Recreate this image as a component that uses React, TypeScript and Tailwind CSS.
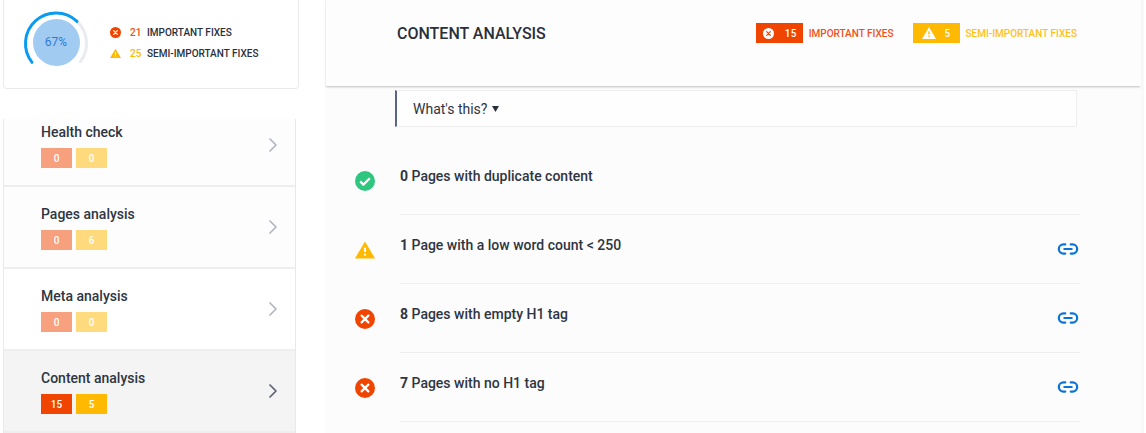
import { ChevronRight, Link2 } from 'lucide-react';

const RED = '#f04500';
const AMBER = '#ffb900';

function ErrorIcon({ size, bg = RED, fg = '#ffffff' }: { size: number; bg?: string; fg?: string }) {
  return (
    <svg width={size} height={size} viewBox="0 0 20 20" className="shrink-0">
      <circle cx="10" cy="10" r="10" fill={bg} />
      <path d="M6.6 6.6l6.8 6.8M13.4 6.6l-6.8 6.8" stroke={fg} strokeWidth="2.2" strokeLinecap="round" />
    </svg>
  );
}

function WarningIcon({ size, bg = AMBER, fg = '#ffffff' }: { size: number; bg?: string; fg?: string }) {
  return (
    <svg width={size} height={size} viewBox="0 0 20 20" className="shrink-0">
      <path d="M10 1.4L20 18.4H0z" fill={bg} />
      <rect x="9" y="7.6" width="2" height="4.4" fill={fg} />
      <rect x="9" y="13.6" width="2" height="2" fill={fg} />
    </svg>
  );
}

function OkIcon() {
  return (
    <svg width="20" height="20" viewBox="0 0 20 20" className="shrink-0">
      <circle cx="10" cy="10" r="10" fill="#2fc77f" />
      <path d="M5.2 10.4l3.2 3.2 6.4-6.4" fill="none" stroke="#ffffff" strokeWidth="2.2" />
    </svg>
  );
}

function Gauge() {
  return (
    <div className="relative h-[68px] w-[68px] shrink-0">
      <svg width="68" height="68" viewBox="0 0 68 68" className="absolute inset-0">
        <path d="M55 11.38A30.5 30.5 0 0 1 58.5 51.67" fill="none" stroke="#e9ebf0" strokeWidth="3" strokeLinecap="round" />
        <path d="M10 52.32A30.5 30.5 0 0 1 55 11.38" fill="none" stroke="#0a9bf0" strokeWidth="3" strokeLinecap="round" />
        <circle cx="34.5" cy="32.5" r="23.5" fill="#a2cbf1" />
      </svg>
      <div className="absolute left-0 top-[23px] w-full text-center text-[12px] leading-[18px] text-[#2f7ad6]">67%</div>
    </div>
  );
}

const navItems = [
  { name: 'Health check', red: 0, amber: 0 },
  { name: 'Pages analysis', red: 0, amber: 6 },
  { name: 'Meta analysis', red: 0, amber: 0 },
  { name: 'Content analysis', red: 15, amber: 5, active: true },
];

const rows = [
  { count: '0', label: 'Pages with duplicate content', type: 'ok' },
  { count: '1', label: 'Page with a low word count < 250', type: 'warn' },
  { count: '8', label: 'Pages with empty H1 tag', type: 'err' },
  { count: '7', label: 'Pages with no H1 tag', type: 'err' },
];

export default function App() {
  return (
    <div className="flex h-[433px] w-[1146px] overflow-hidden bg-white font-['Roboto',sans-serif] text-[#2a303b]">
      {/* Left column */}
      <div className="w-[325px] shrink-0 pl-[3px]">
        <div className="flex h-[89px] w-[296px] items-start rounded-b-sm border border-t-0 border-[#ebebeb] pl-[18px] pt-[10px]">
          <Gauge />
          <div className="ml-[20px] mt-[15px] flex flex-col gap-[6px] text-[10px] font-medium leading-[15px]">
            <div className="flex items-center">
              <ErrorIcon size={11} />
              <span className="ml-[9px] w-[17px] text-[#f04f15]">21</span>
              <span className="text-[#2a303b]">IMPORTANT FIXES</span>
            </div>
            <div className="flex items-center">
              <WarningIcon size={11} />
              <span className="ml-[9px] w-[17px] text-[#ffb900]">25</span>
              <span className="text-[#2a303b]">SEMI-IMPORTANT FIXES</span>
            </div>
          </div>
        </div>

        <div className="mt-[30px] w-[293px] border-x border-[#e9e9ec] bg-[#fdfdfd]">
          {navItems.map((item, i) => (
            <div
              key={item.name}
              className={`flex items-center justify-between border-b-2 border-[#eeeeee] pl-[37px] pr-[10px] ${
                item.active ? 'bg-[#f4f4f5]' : i === 2 ? 'bg-white' : 'bg-[#fdfdfd]'
              } ${i === 0 ? 'h-[68px]' : 'h-[82px]'}`}
            >
              <div className={`self-start ${i === 0 ? 'pt-[4px]' : 'pt-[18px]'}`}>
                <div className="text-[14px] font-medium leading-[18px] text-[#2f3541]">{item.name}</div>
                <div className={`mt-[7px] flex gap-[4px] text-[10px] font-medium text-white ${item.active ? '' : 'opacity-50'}`}>
                  <span className="flex h-[20px] w-[31px] items-center justify-center bg-[#f04500]">{item.red}</span>
                  <span className="flex h-[20px] w-[31px] items-center justify-center bg-[#ffb900]">{item.amber}</span>
                </div>
              </div>
              <ChevronRight
                size={24}
                strokeWidth={1.7}
                className={`${item.active ? 'text-[#5a6178]' : 'text-[#b2b5c4]'} ${i === 0 ? 'mb-[14px]' : ''}`}
              />
            </div>
          ))}
        </div>
      </div>

      {/* Main */}
      <div className="flex w-[819px] shrink-0 flex-col border-r-[3px] border-[#f8f8f8] bg-[#fcfcfc]">
        <div className="flex h-[86px] shrink-0 items-start border-l border-[#eeeeee] bg-[#fdfdfd] pl-[71px] pr-[64px] pt-[23px] shadow-[0_2px_2px_-1px_rgba(0,0,0,0.25)]">
          <h1 className="pt-[1px] text-[16px] font-medium leading-[20px] text-[#2a303b]">CONTENT ANALYSIS</h1>
          <div className="ml-auto flex items-center text-[10px] font-medium">
            <span className="flex h-[20px] w-[47px] items-center bg-[#f04500] pl-[7px] text-white">
              <ErrorIcon size={11} bg="#ffffff" fg={RED} />
              <span className="ml-[11px] tracking-[0.5px]">15</span>
            </span>
            <span className="ml-[6px] text-[#f0501a]">IMPORTANT FIXES</span>
            <span className="ml-[19px] flex h-[20px] w-[47px] items-center bg-[#ffb900] pl-[9px] text-white">
              <WarningIcon size={14} bg="#ffffff" fg={AMBER} />
              <span className="ml-[9px]">5</span>
            </span>
            <span className="ml-[6px] text-[#ffc21a]">SEMI-IMPORTANT FIXES</span>
          </div>
        </div>

        <div className="pl-[70px] pr-[66px]">
          <div className="mt-[4px] flex h-[37px] w-[682px] items-center border border-l-2 border-[#eeeeee] border-l-[#5a6487] bg-[#fefefe] pl-[16px] pt-[1px] text-[14px] text-[#2f3541]">
            What's this?
            <svg width="7" height="6" viewBox="0 0 7 6" className="ml-[5px]">
              <path d="M0 0h7L3.5 6z" fill="#2a303b" />
            </svg>
          </div>

          <div className="mt-[19px]">
            {rows.map((row) => (
              <div key={row.count} className="-ml-[41px] flex h-[69px] w-[726px] items-center">
                <div className="flex h-[20px] w-[46px] shrink-0 pl-[1px]">
                  {row.type === 'ok' && <OkIcon />}
                  {row.type === 'warn' && <WarningIcon size={20} />}
                  {row.type === 'err' && <ErrorIcon size={20} />}
                </div>
                <div className="flex h-full flex-1 items-center justify-between border-b border-[#eeeeee] pr-[1px]">
                  <div className="-translate-y-[4px] text-[14px] font-medium text-[#2f3541]">
                    <span className="font-bold">{row.count}</span> {row.label}
                  </div>
                  {row.type !== 'ok' && <Link2 size={22} strokeWidth={2.4} className="text-[#0a74d6]" />}
                </div>
              </div>
            ))}
          </div>
        </div>
      </div>
    </div>
  );
}
